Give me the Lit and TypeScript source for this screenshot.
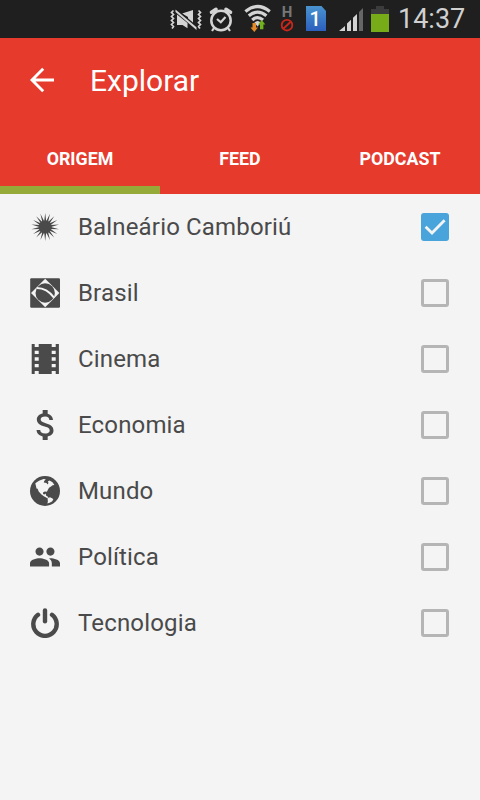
import { LitElement, html, css, svg } from "lit";
import { customElement, property, state } from "lit/decorators.js";
import { classMap } from "lit/directives/class-map.js";

const sunPoints = (): string => {
  const spikes = 18;
  const pts: string[] = [];
  for (let i = 0; i < spikes * 2; i++) {
    const r = i % 2 === 0 ? 14 : 5.8;
    const a = (i * Math.PI) / spikes - Math.PI / 2;
    pts.push(`${(15.2 + r * Math.cos(a)).toFixed(2)},${(14.9 + r * Math.sin(a)).toFixed(2)}`);
  }
  return pts.join(" ");
};

const icons: Record<string, unknown> = {
  sun: svg`<polygon points=${sunPoints()} /><circle cx="15.2" cy="14.9" r="6.5" />`,
  brasil: svg`
    <rect x="0.2" y="0.3" width="29.8" height="29.5" rx="1.2" />
    <path class="cut" d="M15.2 0.8 29.4 15 15.2 29.2 1 15Z" />
    <circle cx="15.2" cy="15" r="9.7" />
    <path class="cut-line" d="M6.8 9.9C13.2 9.9 19.5 13.4 24 19.6" />`,
  film: svg`
    <path fill-rule="evenodd" d="M1.7 0H4.7V3H8.7V0H21.7V3H25.7V0H28.9V30H25.7V27H21.7V30H8.7V27H4.7V30H1.7Z
      M4.7 6.7V10H8.7V6.7ZM4.7 13.3V16.7H8.7V13.3ZM4.7 20V23.3H8.7V20Z
      M21.7 6.7V10H25.7V6.7ZM21.7 13.3V16.7H25.7V13.3ZM21.7 20V23.3H25.7V20Z" />`,
  dollar: svg`<path transform="scale(1.6667) translate(-2.4 -3)" d="M11.8 10.9c-2.27-.59-3-1.2-3-2.15 0-1.09 1.01-1.85 2.7-1.85 1.78 0 2.44.85 2.5 2.1h2.21c-.07-1.72-1.12-3.3-3.21-3.81V3h-3v2.16c-1.94.42-3.5 1.68-3.5 3.61 0 2.31 1.91 3.46 4.7 4.13 2.5.6 3 1.48 3 2.41 0 .69-.49 1.79-2.7 1.79-2.06 0-2.87-.92-2.98-2.1h-2.2c.12 2.19 1.76 3.42 3.68 3.83V21h3v-2.15c1.95-.37 3.5-1.5 3.5-3.55 0-2.84-2.43-3.81-4.7-4.4z" />`,
  globe: svg`
    <circle cx="15" cy="15" r="15" />
    <path class="cut" d="M9 4.7 13.5 2.9 15.8 3.2 14.2 5 13.8 6.6 16.5 7 17.5 8.5 18.5 7 17.8 5.5 19.5 4.4 22.5 6.2 24.4 8.9 22.6 9.3 21 10.6 19 11.8 17.9 13.7 16.9 15.8 14.9 15.6 13.2 16.3 13 18 14.4 18.6 15.8 17.6 16 19.6 17.6 20.6 18.6 21.8 17 22 13.8 20.2 11.2 18.2 8.7 15.4 7.6 12.8 6.5 12.6 5.9 9.7 5.3 7.2Z" />
    <path class="cut" d="M17.5 22.2 20 21.2 22.6 22.4 23.3 23.6 22 25.4 19.6 26.8 17.4 27.4 17.9 25.2Z" />`,
  people: svg`<path transform="scale(1.3636) translate(-1 -1)" d="M16 11c1.66 0 2.99-1.34 2.99-3S17.66 5 16 5c-1.66 0-3 1.34-3 3s1.34 3 3 3zm-8 0c1.66 0 2.99-1.34 2.99-3S9.66 5 8 5C6.34 5 5 6.34 5 8s1.34 3 3 3zm0 2c-2.33 0-7 1.17-7 3.5V19h14v-2.5c0-2.33-4.67-3.5-7-3.5zm8 0c-.29 0-.62.02-.97.05 1.16.84 1.97 1.97 1.97 3.45V19h6v-2.5c0-2.33-4.67-3.5-7-3.5z" />`,
  power: svg`
    <path class="ring" d="M8 6.8A11.7 11.7 0 1 0 22 6.8" />
    <path class="ring" d="M15 2.4V13.2" />`,
};

@customElement("status-bar")
class StatusBar extends LitElement {
  static styles = css`
    :host { display: flex; height: 38px; background: #1f1f1f; color: #d0d0d0; justify-content: flex-end; padding-right: 15px; box-sizing: border-box; }
    svg { display: block; flex: none; height: 38px; fill: #d4d4d4; }
    .vibrate { width: 32px; margin-right: 6px; }
    .alarm { width: 26px; margin-right: 9px; }
    .wifi { width: 29px; margin-right: 8px; }
    .net { width: 14px; margin-right: 11px; }
    .sim { width: 22px; margin-right: 11px; }
    .signal { width: 26px; margin-right: 6px; }
    .battery { width: 20px; margin-right: 8px; }
    .line { fill: none; stroke: #d4d4d4; }
    .time { width: 67px; font: 400 27px/39px Roboto, sans-serif; white-space: nowrap; }
    .small { font: 700 15px Roboto, sans-serif; fill: #777; }
    .num { font: 500 20px Roboto, sans-serif; fill: #fff; }
  `;
  render() {
    return html`
      <svg class="vibrate" viewBox="170 0 32 38">
        <path class="line" stroke-width="1.7" d="M173.5 10.5 171.5 12.5 173.5 14.5 171.5 16.5 173.5 18.5 171.5 20.5 173.5 22.5 171.5 24.5 173.5 26.5 172 28.5M198.5 10.5 200.5 12.5 198.5 14.5 200.5 16.5 198.5 18.5 200.5 20.5 198.5 22.5 200.5 24.5 198.5 26.5 200 28.5" />
        <path d="M177 14.5V25H182.5L187.5 28.3V23ZM182 13.5 193 10V26L188 21V17Z" />
        <path fill="none" stroke="#1f1f1f" stroke-width="2" d="M175.5 9 197 27.2" />
        <path d="M175.5 9.5 196.5 27.2V30L175.5 12Z" />
      </svg>
      <svg class="alarm" viewBox="208 0 26 38">
        <circle class="line" cx="221" cy="20.5" r="9.7" stroke-width="2.5" />
        <path class="line" stroke-width="2.2" d="M217 19 220.8 22.3 225.5 17M214 28 212 31M228 28 230 31" />
        <path class="line" stroke-width="3.6" stroke-linecap="round" d="M211.5 12.2 216 9.3M230.5 12.2 226 9.3" />
      </svg>
      <svg class="wifi" viewBox="243 0 29 38">
        <path class="line" stroke-width="3.2" d="M245.4 11.4Q257.5 1.6 269.8 11.4M248.8 15.8Q257.5 8.4 266.4 15.8M252.2 20Q257.5 15.2 263 20" />
        <path d="M254.4 22.6Q257.6 19.6 260.8 22.6L257.6 26.5Z" />
        <path fill="#e28a28" d="M252.5 23H256V27.5H258L254.3 32 250.5 27.5H252.5Z" />
        <path fill="#72b01d" d="M260 29.2H263.4V24.5H265.4L261.7 20 258 24.5H260Z" />
      </svg>
      <svg class="net" viewBox="280 0 14 38">
        <text class="small" x="287" y="17.4" text-anchor="middle">H</text>
        <circle cx="287" cy="25.2" r="5.3" fill="none" stroke="#c6281c" stroke-width="1.8" />
        <path stroke="#c6281c" stroke-width="1.8" d="M283.5 28.5 290.5 22" />
      </svg>
      <svg class="sim" viewBox="305 0 22 38">
        <defs><linearGradient id="g" x2="0" y2="1"><stop offset="0" stop-color="#4a93cf" /><stop offset="1" stop-color="#2b5fbd" /></linearGradient></defs>
        <path fill="url(#g)" d="M306 6H321.5L326 11V31H306Z" />
        <text class="num" x="315.2" y="25.8" text-anchor="middle">1</text>
      </svg>
      <svg class="signal" viewBox="338 0 26 38">
        <path d="M339 31 345 26V31ZM347 31V23.6L351 19.8V31ZM353 31V17.8L357 14V31Z" />
        <path fill="#666" d="M359 31V12L363 8V31Z" />
      </svg>
      <svg class="battery" viewBox="370 0 20 38">
        <path fill="#3c3c3c" d="M376 6H384V9H389V14H371V9H376Z" />
        <path fill="#78ab18" d="M371 14H389V32H371Z" />
      </svg>
      <div class="time">14:37</div>`;
  }
}

@customElement("origin-row")
class OriginRow extends LitElement {
  @property() icon = "";
  @property() label = "";
  @property({ type: Boolean }) checked = false;
  static styles = css`
    :host { display: flex; align-items: center; height: 66px; padding: 0 31px 0 30px; box-sizing: border-box; }
    .icon { width: 30px; height: 30px; flex: none; fill: #4a4a4a; }
    .cut { fill: #f4f4f4; }
    .cut-line { fill: none; stroke: #f4f4f4; stroke-width: 2; }
    .ring { fill: none; stroke: #4a4a4a; stroke-width: 4.4; stroke-linecap: round; }
    .label { flex: 1; margin-left: 18px; font: 400 24px/30px Roboto, sans-serif; letter-spacing: 0.16px; color: #4a4a4a; }
    .box { width: 28px; height: 28px; box-sizing: border-box; border: 3px solid #b5b5b5; border-radius: 3px; }
    .box.on { border: 0; background: #48a4da; }
    .tick { display: block; width: 28px; height: 28px; fill: none; stroke: #f4f4f4; stroke-width: 2.8; }
  `;
  render() {
    return html`
      <svg class="icon" viewBox="0 0 30 30">${icons[this.icon]}</svg>
      <span class="label">${this.label}</span>
      <div class=${classMap({ box: true, on: this.checked })} @click=${() => (this.checked = !this.checked)}>
        ${this.checked ? html`<svg class="tick" viewBox="0 0 28 28"><path d="M4.6 13.8 11 20 23.6 7.2" /></svg>` : ""}
      </div>`;
  }
}

@customElement("app-root")
class AppRoot extends LitElement {
  @state() private active = 0;
  private tabs = ["ORIGEM", "FEED", "PODCAST"];
  private rows = [
    { icon: "sun", label: "Balneário Camboriú", on: true },
    { icon: "brasil", label: "Brasil", on: false },
    { icon: "film", label: "Cinema", on: false },
    { icon: "dollar", label: "Economia", on: false },
    { icon: "globe", label: "Mundo", on: false },
    { icon: "people", label: "Política", on: false },
    { icon: "power", label: "Tecnologia", on: false },
  ];
  static styles = css`
    :host { display: block; height: 800px; overflow: hidden; background: #f4f4f4; font-family: Roboto, sans-serif; }
    .header { height: 156px; background: #e53a2c; color: #fff; display: flex; flex-direction: column; }
    .bar { height: 84px; display: flex; align-items: center; padding-left: 30px; }
    .back { width: 25px; height: 26px; margin-right: 35px; fill: none; stroke: #fff; stroke-width: 2.9; }
    .title { font-size: 30px; line-height: 36px; padding-top: 1px; }
    .tabs { flex: 1; display: grid; grid-template-columns: repeat(3, 1fr); }
    .tab { box-sizing: border-box; border-bottom: 8px solid transparent; text-align: center; font-weight: 700; font-size: 17.8px; line-height: 73px; height: 72px; }
    .tab.active { border-bottom-color: #96aa3a; }
  `;
  render() {
    return html`
      <status-bar></status-bar>
      <div class="header">
        <div class="bar">
          <svg class="back" viewBox="0 0 25 26"><path d="M24 13H2.5M13.2 1.8 2 13 13.2 24.2" /></svg>
          <span class="title">Explorar</span>
        </div>
        <div class="tabs">
          ${this.tabs.map((t, i) => html`<div class=${classMap({ tab: true, active: i === this.active })} @click=${() => (this.active = i)}>${t}</div>`)}
        </div>
      </div>
      ${this.rows.map((r) => html`<origin-row .icon=${r.icon} .label=${r.label} .checked=${r.on}></origin-row>`)}`;
  }
}
